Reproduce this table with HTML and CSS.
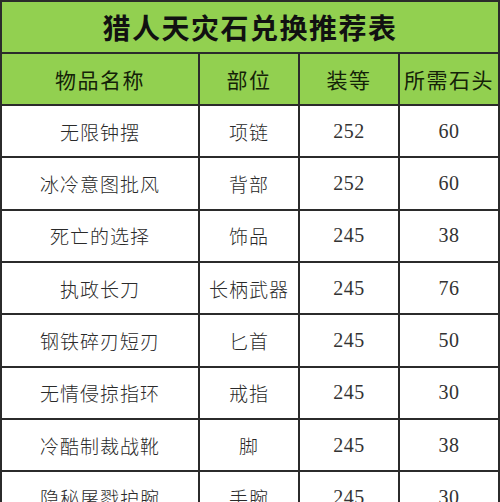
FILE: index.html
```html
<!DOCTYPE html>
<html lang="zh">
<head>
<meta charset="utf-8">
<link rel="stylesheet" href="styles.css">
</head>
<body>
<div class="sheet">
  <div class="cell title">猎人天灾石兑换推荐表</div>
  <div class="cell head">物品名称</div>
  <div class="cell head">部位</div>
  <div class="cell head">装等</div>
  <div class="cell head">所需石头</div>

  <div class="cell">无限钟摆</div><div class="cell">项链</div><div class="cell num">252</div><div class="cell num">60</div>
  <div class="cell">冰冷意图批风</div><div class="cell">背部</div><div class="cell num">252</div><div class="cell num">60</div>
  <div class="cell">死亡的选择</div><div class="cell">饰品</div><div class="cell num">245</div><div class="cell num">38</div>
  <div class="cell">执政长刀</div><div class="cell">长柄武器</div><div class="cell num">245</div><div class="cell num">76</div>
  <div class="cell">钢铁碎刃短刃</div><div class="cell">匕首</div><div class="cell num">245</div><div class="cell num">50</div>
  <div class="cell">无情侵掠指环</div><div class="cell">戒指</div><div class="cell num">245</div><div class="cell num">30</div>
  <div class="cell">冷酷制裁战靴</div><div class="cell">脚</div><div class="cell num">245</div><div class="cell num">38</div>
  <div class="cell">隐秘屠戮护腕</div><div class="cell">手腕</div><div class="cell num">245</div><div class="cell num">30</div>
</div>
</body>
</html>
```

FILE: styles.css
```css
html, body {
  margin: 0;
  padding: 0;
  background: #ffffff;
}

body {
  width: 500px;
  height: 502px;
  overflow: hidden;
}

.sheet {
  width: 500px;
  box-sizing: border-box;
  padding: 2px;
  background: #2b2b2b;
  display: grid;
  grid-template-columns: 196px 98px 98px 98px;
  grid-template-rows: 50px 50px;
  grid-auto-rows: 50.33px;
  gap: 2px;
}

.cell {
  background: #ffffff;
  display: flex;
  align-items: center;
  justify-content: center;
  font-family: "Noto Sans CJK SC", sans-serif;
  font-size: 19px;
  font-weight: 300;
  letter-spacing: 1px;
  color: #2a2a2a;
  white-space: nowrap;
}

.num {
  font-family: "Liberation Serif", serif;
  font-size: 20px;
  font-weight: 400;
  letter-spacing: 0.5px;
  color: #333333;
}

.title {
  grid-column: 1 / -1;
  background: #92d050;
  font-family: "Noto Sans CJK SC", sans-serif;
  font-size: 28px;
  font-weight: 700;
  letter-spacing: 1.5px;
  color: #111111;
}

.head {
  background: #92d050;
  font-family: "Noto Sans CJK SC", sans-serif;
  font-size: 21px;
  font-weight: 400;
  letter-spacing: 1.5px;
  color: #142208;
}
```
